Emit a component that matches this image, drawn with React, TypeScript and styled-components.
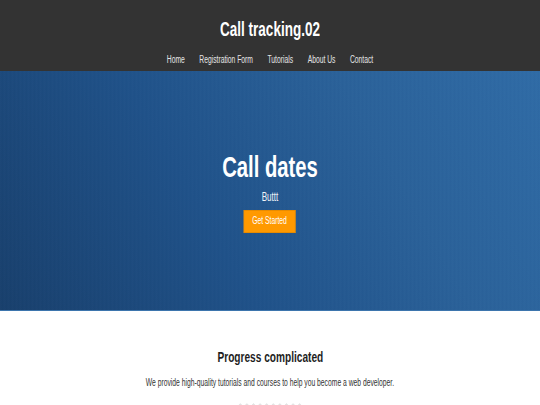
import React from "react";
import styled, { createGlobalStyle, css } from "styled-components";

const GlobalStyle = createGlobalStyle`
  html, body { margin: 0; padding: 0; background: #fff; }
  body { font-family: "Liberation Sans", Arial, sans-serif; overflow: hidden; }
  * { box-sizing: border-box; }
`;

/* the reference text is horizontally compressed */
const narrow = css`
  transform: scaleX(0.675);
`;

const Page = styled.div`
  width: 540px;
  min-height: 405px;
`;

const Header = styled.header`
  background: #333333;
  height: 71px;
  padding-top: 17px;
`;

const SiteTitle = styled.h1`
  ${narrow};
  margin: 0;
  color: #ffffff;
  font-size: 20px;
  line-height: 24px;
  font-weight: bold;
  text-align: center;
`;

const Nav = styled.nav`
  ${narrow};
  margin-top: 13px;
  display: flex;
  justify-content: center;
  gap: 21.5px;
`;

const NavLink = styled.a`
  color: #e6e6e6;
  font-size: 10px;
  line-height: 12px;
  text-decoration: none;
  white-space: nowrap;
`;

const Hero = styled.section`
  height: 240px;
  padding-top: 78px;
  display: flex;
  flex-direction: column;
  align-items: center;
  color: #ffffff;
  background:
    repeating-linear-gradient(
      90deg,
      rgba(255, 255, 255, 0.01) 0px,
      rgba(255, 255, 255, 0.01) 1px,
      rgba(0, 0, 0, 0.012) 2px,
      rgba(0, 0, 0, 0) 3px,
      rgba(255, 255, 255, 0.008) 4px
    ),
    linear-gradient(60deg, #183f6c 0%, #1f5189 38%, #2a6199 70%, #2f6ba6 100%);
  border-bottom: 1px solid #3d75ad;
`;

const HeroTitle = styled.h2`
  ${narrow};
  margin: 0;
  width: 100%;
  font-size: 30px;
  line-height: 36px;
  font-weight: bold;
  text-align: center;
`;

const HeroSub = styled.p`
  ${narrow};
  margin: 5px 0 0;
  width: 100%;
  font-size: 12px;
  line-height: 14px;
  text-align: center;
  color: #f2f4f8;
`;

const CTA = styled.a`
  ${narrow};
  display: inline-block;
  margin-top: 6px;
  padding: 5px 13px 6px;
  background: #ff9900;
  box-shadow: inset 0 0 0 1px #e88b00;
  color: #ffffff;
  font-size: 10px;
  line-height: 12px;
  text-decoration: none;
  white-space: nowrap;
`;

const Intro = styled.section`
  padding-top: 37px;
  display: flex;
  flex-direction: column;
  align-items: center;
  text-align: center;
`;

const IntroTitle = styled.h2`
  ${narrow};
  margin: 0;
  color: #1e1e1e;
  font-size: 15px;
  line-height: 18px;
  font-weight: bold;
`;

const IntroText = styled.p`
  ${narrow};
  margin: 11px 0 0;
  color: #333333;
  font-size: 10px;
  line-height: 12px;
  white-space: nowrap;
`;

const DotRow = styled.div`
  margin-top: 14px;
  width: 66px;
  height: 3px;
  background-image: radial-gradient(circle, #e2e2e2 0.9px, transparent 1.3px);
  background-size: 6.6px 3px;
`;

const links = ["Home", "Registration Form", "Tutorials", "About Us", "Contact"];

export default function App() {
  return (
    <>
      <GlobalStyle />
      <Page>
        <Header>
          <SiteTitle>Call tracking.02</SiteTitle>
          <Nav>
            {links.map((l) => (
              <NavLink key={l} href="#">
                {l}
              </NavLink>
            ))}
          </Nav>
        </Header>
        <Hero>
          <HeroTitle>Call dates</HeroTitle>
          <HeroSub>Buttt</HeroSub>
          <CTA href="#">Get Started</CTA>
        </Hero>
        <Intro>
          <IntroTitle>Progress complicated</IntroTitle>
          <IntroText>
            We provide high-quality tutorials and courses to help you become a web developer.
          </IntroText>
          <DotRow />
        </Intro>
      </Page>
    </>
  );
}
